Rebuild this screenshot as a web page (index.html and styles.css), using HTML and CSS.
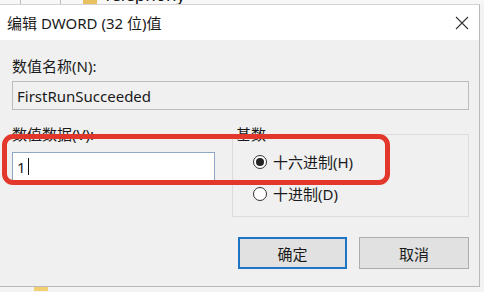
FILE: index.html
```html
<!DOCTYPE html>
<html lang="zh-CN">
<head>
<meta charset="utf-8">
<title>编辑 DWORD (32 位)值</title>
<link rel="stylesheet" href="styles.css">
</head>
<body>
<div class="screen">
  <div class="strip strip-top">
    <span class="tree-line"></span>
    <span class="tree-line second"></span>
    <span class="folder"></span>
    <span class="strip-text">Telephony</span>
  </div>
  <div class="dialog">
    <div class="titlebar">
      <span class="title">编辑 DWORD (32 位)值</span>
      <svg class="close" width="14" height="14" viewBox="0 0 14 14"><path d="M1 1 L13 13 M13 1 L1 13" stroke="#333" stroke-width="1.1" fill="none"/></svg>
    </div>
    <div class="content">
      <div class="label">数值名称(N):</div>
      <div class="field readonly">FirstRunSucceeded</div>
      <div class="row">
        <div class="col-left">
          <div class="label label-data">数值数据(V):</div>
          <div class="field edit">1<span class="caret"></span></div>
        </div>
        <fieldset class="group">
          <legend>基数</legend>
          <div class="radio-row">
            <span class="radio checked"></span><span>十六进制(H)</span>
          </div>
          <div class="radio-row">
            <span class="radio"></span><span>十进制(D)</span>
          </div>
        </fieldset>
      </div>
      <div class="buttons">
        <div class="btn default">确定</div>
        <div class="btn">取消</div>
      </div>
    </div>
    <div class="highlight"></div>
  </div>
  <div class="strip strip-bottom">
    <span class="arrow">›</span>
    <span class="folder"></span>
    <span class="strip-text">Windows Error</span>
  </div>
</div>
</body>
</html>
```
FILE: styles.css
```css
html, body {
  margin: 0;
  padding: 0;
}
body {
  width: 484px;
  height: 292px;
  overflow: hidden;
  background: #f3f3f3;
  font-family: "Noto Sans", "Noto Sans CJK SC", sans-serif;
  color: #1a1a1a;
}
.screen {
  display: flex;
  flex-direction: column;
  width: 484px;
  height: 292px;
}
.strip {
  display: flex;
  overflow: hidden;
  background: #f7f7f7;
  flex: none;
}
.strip-top {
  height: 4px;
  align-items: flex-end;
}
.strip-bottom {
  height: 4px;
  align-items: flex-start;
  background: #f4f4f4;
}
.strip-text {
  font-size: 17px;
  line-height: 17px;
  color: #111;
}
.strip-top .strip-text {
  margin-bottom: 1px;
  margin-left: 6px;
}
.tree-line {
  width: 1px;
  height: 10px;
  background: #bbb;
  margin-left: 20px;
}
.tree-line.second {
  margin-left: 39px;
}
.folder {
  width: 14px;
  height: 10px;
  background: #e8c060;
  margin-left: 22px;
}
.strip-bottom .arrow {
  font-size: 14px;
  line-height: 14px;
  color: #666;
  margin-left: 16px;
  margin-top: 1px;
}
.strip-bottom .folder {
  margin-left: 14px;
  background: #f0d070;
}
.strip-bottom .strip-text {
  margin-left: 6px;
  margin-top: 2px;
}
.dialog {
  position: relative;
  width: 480px;
  height: 283px;
  background: #f0f0f0;
  border-right: 1px solid #b9b9b9;
  border-bottom: 1px solid #b9b9b9;
  border-top: 1px solid #d4d4d4;
  box-sizing: border-box;
  display: flex;
  flex-direction: column;
  flex: none;
}
.titlebar {
  height: 35px;
  background: #ffffff;
  display: flex;
  align-items: center;
  justify-content: space-between;
  padding: 0 10px 0 7px;
  flex: none;
}
.title {
  font-size: 15px;
  color: #1a1a1a;
}
.close {
  margin-top: 1px;
}
.content {
  padding: 17px 10px 0 12px;
  display: flex;
  flex-direction: column;
}
.label {
  font-size: 15px;
  line-height: 18px;
  height: 18px;
}
.field {
  box-sizing: border-box;
  font-size: 15px;
  display: flex;
  align-items: center;
  padding-left: 4px;
}
.readonly {
  margin-top: 6px;
  height: 29px;
  border: 1px solid #bcbcbc;
  background: #f0f0f0;
}
.row {
  display: flex;
  margin-top: 15px;
}
.col-left {
  width: 203px;
  display: flex;
  flex-direction: column;
}
.edit {
  margin-top: 9px;
  height: 29px;
  border: 1px solid #8ea7c4;
  background: #ffffff;
}
.caret {
  width: 1px;
  height: 17px;
  background: #111;
  margin-left: 2px;
}
.group {
  margin: 0 0 0 17px;
  padding: 9px 0 0 3px;
  width: 237px;
  height: 92px;
  box-sizing: border-box;
  border: 1px solid #dcdcdc;
  display: flex;
  flex-direction: column;
  gap: 12px;
}
.group legend {
  font-size: 15px;
  line-height: 18px;
  height: 18px;
  padding: 0;
  margin: 0;
}
.radio-row {
  display: flex;
  align-items: center;
  font-size: 15px;
  line-height: 20px;
  gap: 6px;
  margin-left: 17px;
}
.radio {
  box-sizing: border-box;
  width: 14px;
  height: 14px;
  border-radius: 50%;
  border: 1px solid #333;
  background: #fff;
  display: flex;
  align-items: center;
  justify-content: center;
}
.radio.checked::after {
  content: "";
  width: 8px;
  height: 8px;
  border-radius: 50%;
  background: #222;
}
.buttons {
  display: flex;
  justify-content: flex-end;
  gap: 12px;
  margin-top: 20px;
}
.btn {
  box-sizing: border-box;
  width: 110px;
  height: 32px;
  border: 1px solid #adadad;
  background: #e1e1e1;
  display: flex;
  align-items: center;
  justify-content: center;
  font-size: 15px;
}
.btn.default {
  width: 109px;
  border: 2px solid #1f74c4;
}
.highlight {
  position: absolute;
  left: 2px;
  top: 129px;
  width: 388px;
  height: 51px;
  box-sizing: border-box;
  border: 5px solid #e2372a;
  border-radius: 11px;
  pointer-events: none;
}
```
